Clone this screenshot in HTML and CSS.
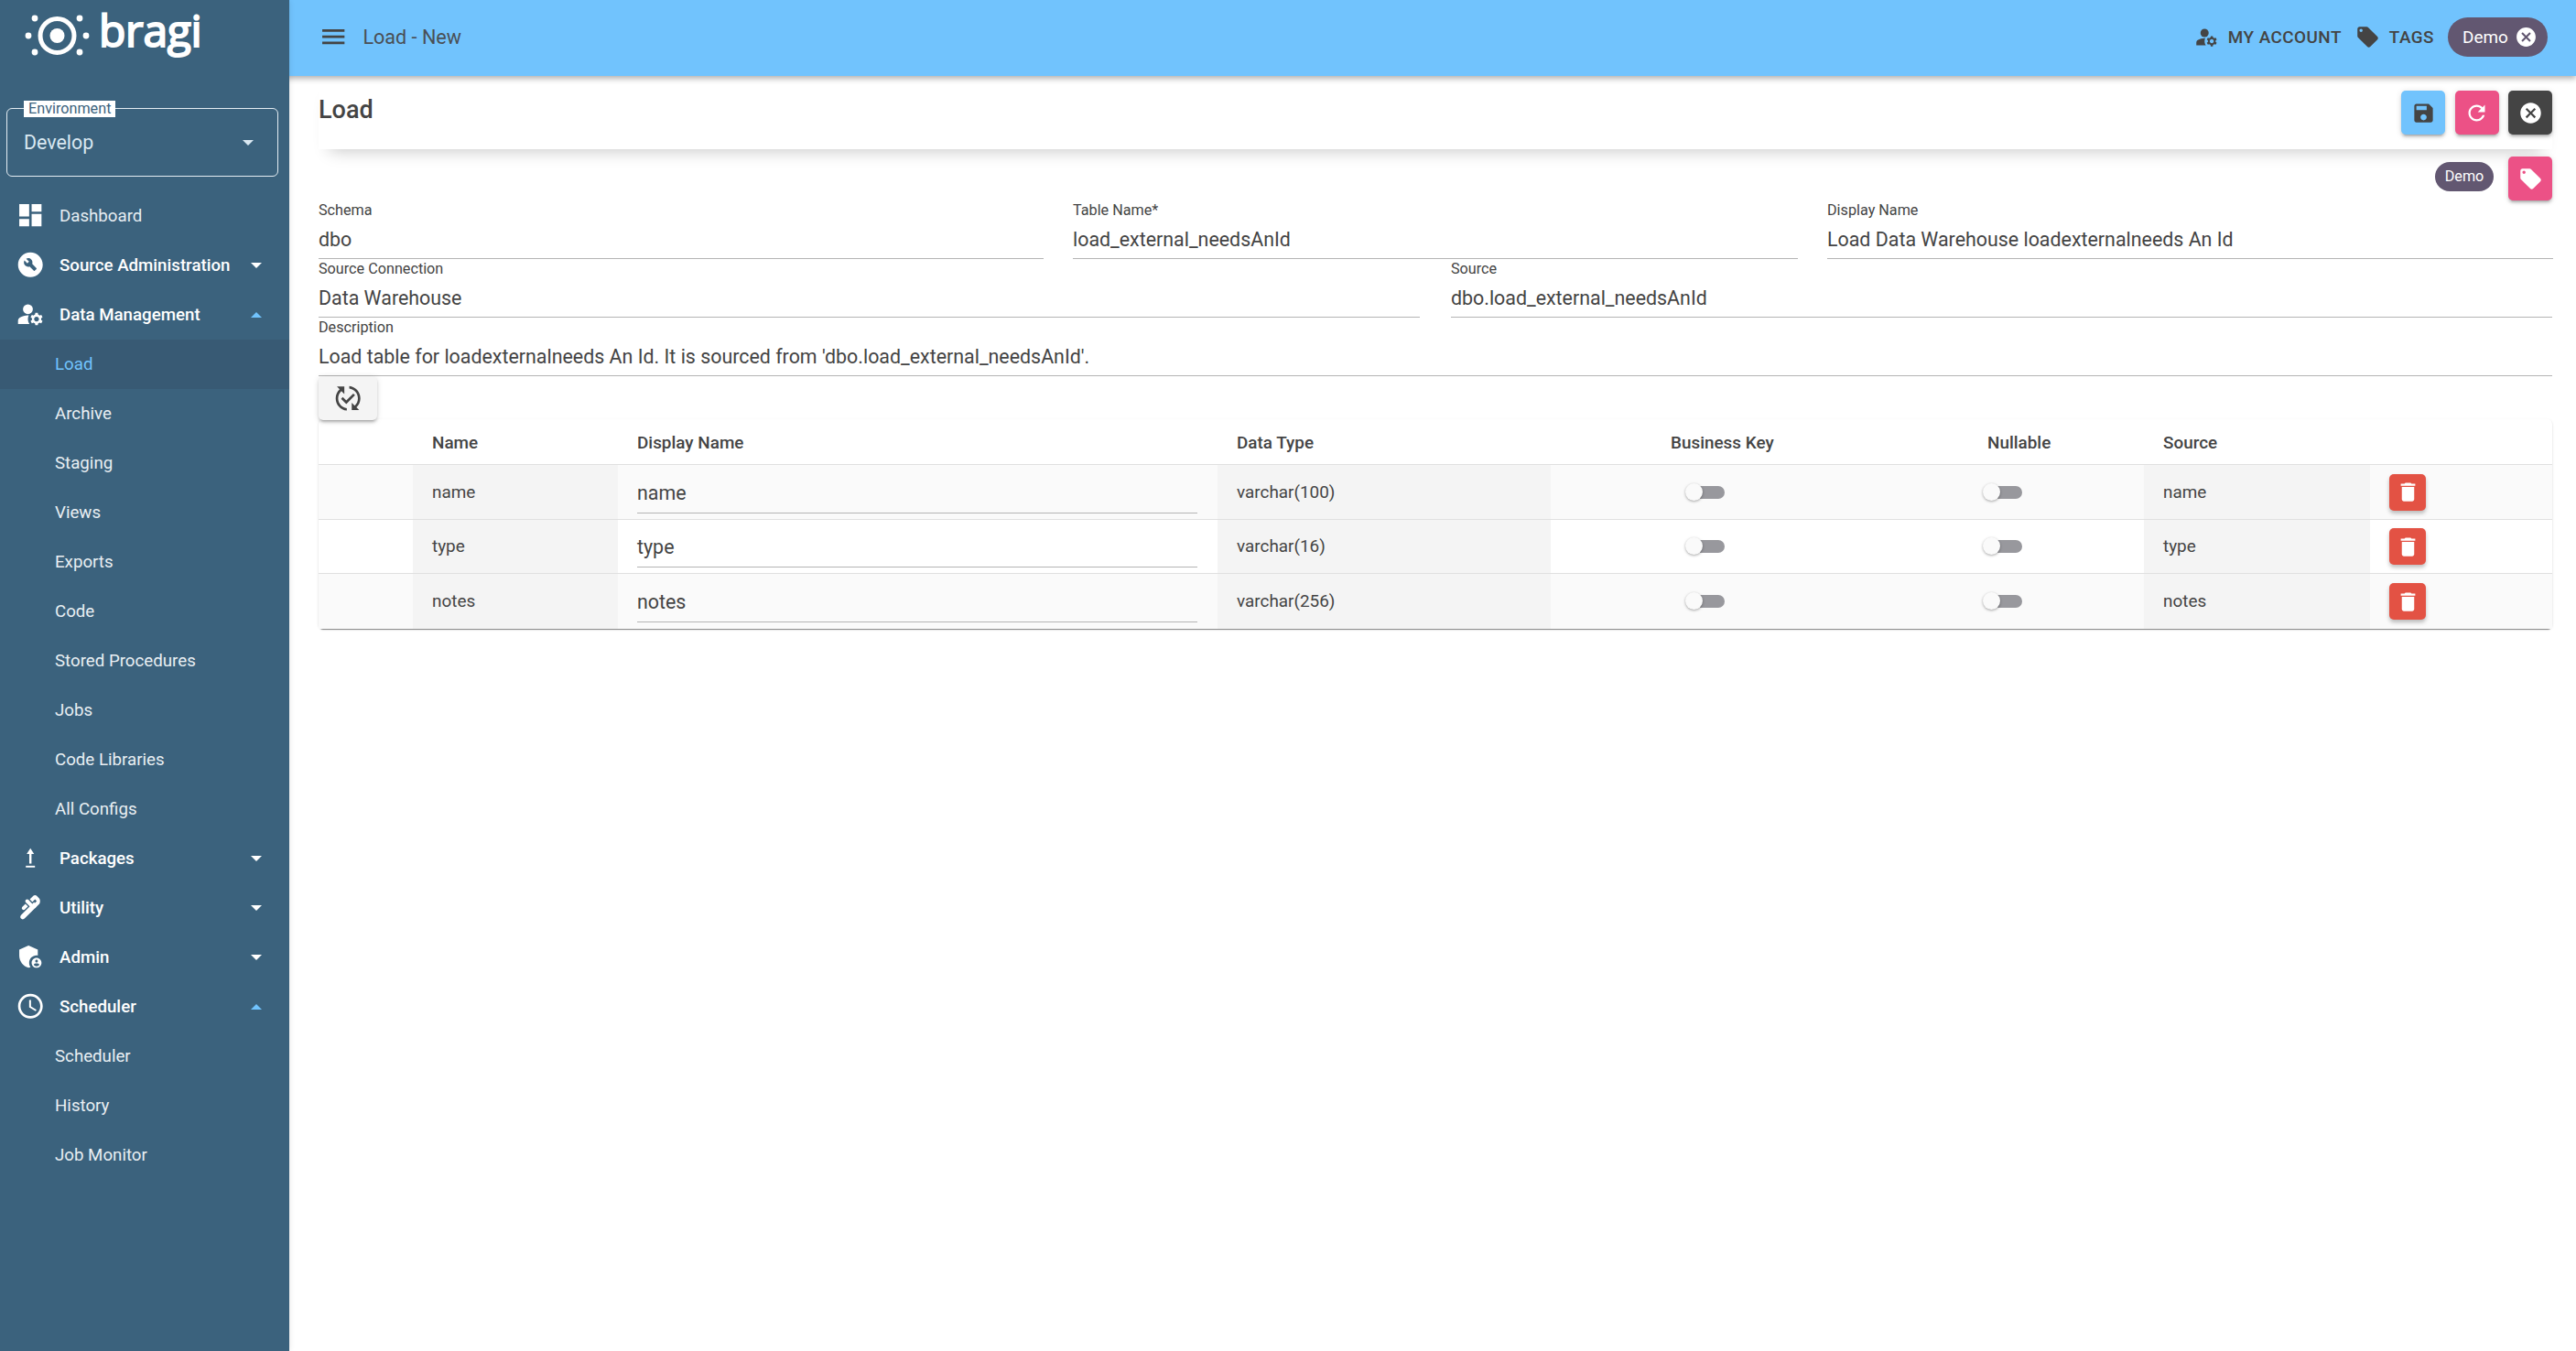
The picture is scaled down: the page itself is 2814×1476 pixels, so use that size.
FILE: index.html
```html
<!DOCTYPE html>
<html lang="en">
<head>
  <meta charset="UTF-8" />
  <title>Bragi - Load</title>
  <link rel="stylesheet" href="styles.css">
</head>
<body>
  <div class="sidebar">
    <div class="logo">
      <svg class="logo-mark" viewBox="0 0 108 83">
        <circle cx="62.5" cy="39" r="18.5" fill="none" stroke="#fff" stroke-width="5"/>
        <circle cx="62.5" cy="39" r="8" fill="#fff"/>
        <circle cx="38" cy="20" r="3.4" fill="#fff"/>
        <circle cx="87" cy="20" r="3.4" fill="#fff"/>
        <circle cx="31" cy="39" r="3.4" fill="#fff"/>
        <circle cx="94" cy="39" r="3.4" fill="#fff"/>
        <circle cx="38" cy="57" r="3.4" fill="#fff"/>
        <circle cx="87" cy="57" r="3.4" fill="#fff"/>
      </svg>
      <span class="logo-word">bragi</span>
    </div>

    <div class="env-select">
      <span class="env-label">Environment</span>
      <span class="env-value">Develop</span>
      <span class="caret caret-env"></span>
    </div>

    <div class="nav">
      <div class="nav-item plain">
        <svg class="nav-icon" viewBox="0 0 24 24"><path d="M3 13h8V3H3v10zm0 8h8v-6H3v6zm10 0h8V11h-8v10zm0-18v6h8V3h-8z"/></svg>
        <span>Dashboard</span>
      </div>
      <div class="nav-item">
        <svg class="nav-icon" viewBox="0 0 24 24"><path d="M12,2C6.48,2,2,6.48,2,12c0,5.52,4.48,10,10,10s10-4.48,10-10C22,6.48,17.52,2,12,2z M16.9,15.49l-1.4,1.4c-0.2,0.2-0.51,0.2-0.71,0l-3.41-3.41c-1.22,0.43-2.64,0.17-3.62-0.81c-1.11-1.11-1.3-2.79-0.59-4.1l2.35,2.35l1.41-1.41L8.58,7.17c1.32-0.71,2.99-0.52,4.1,0.59c0.98,0.98,1.24,2.4,0.81,3.62l3.41,3.41C17.09,14.98,17.09,15.3,16.9,15.49z"/></svg>
        <span>Source Administration</span>
        <span class="caret"></span>
      </div>
      <div class="nav-item">
        <svg class="nav-icon" viewBox="0 0 24 24"><circle cx="10" cy="8" r="4"/><path d="M10.67,13.02C10.45,13.01,10.23,13,10,13c-2.42,0-4.68,0.67-6.61,1.82C2.51,15.34,2,16.32,2,17.35V20h9.26C10.47,18.87,10,17.49,10,16C10,14.93,10.25,13.93,10.67,13.02z"/><path d="M20.75,16c0-0.22-0.03-0.42-0.06-0.63l1.14-1.01l-1-1.73l-1.45,0.49c-0.32-0.27-0.68-0.48-1.08-0.63L18,11h-2l-0.3,1.49c-0.4,0.15-0.76,0.36-1.08,0.63l-1.45-0.49l-1,1.73l1.14,1.01c-0.03,0.21-0.06,0.41-0.06,0.63s0.03,0.42,0.06,0.63l-1.14,1.01l1,1.73l1.45-0.49c0.32,0.27,0.68,0.48,1.08,0.63L16,21h2l0.3-1.49c0.4-0.15,0.76-0.36,1.08-0.63l1.45,0.49l1-1.73l-1.14-1.01C20.72,16.42,20.75,16.22,20.75,16z M17,18c-1.1,0-2-0.9-2-2s0.9-2,2-2s2,0.9,2,2S18.1,18,17,18z"/></svg>
        <span>Data Management</span>
        <span class="caret open"></span>
      </div>
      <div class="nav-sub active">Load</div>
      <div class="nav-sub">Archive</div>
      <div class="nav-sub">Staging</div>
      <div class="nav-sub">Views</div>
      <div class="nav-sub">Exports</div>
      <div class="nav-sub">Code</div>
      <div class="nav-sub">Stored Procedures</div>
      <div class="nav-sub">Jobs</div>
      <div class="nav-sub">Code Libraries</div>
      <div class="nav-sub">All Configs</div>
      <div class="nav-item">
        <svg class="nav-icon" viewBox="0 0 24 24"><path d="M8.3 18.4h7.4v1.4H8.3z"/><path d="M11.1 16.6V8.8H9L12 4.2l3 4.6h-2.1v7.8z"/></svg>
        <span>Packages</span>
        <span class="caret"></span>
      </div>
      <div class="nav-item">
        <svg class="nav-icon" viewBox="0 0 24 24"><path d="M19.28,4.93l-2.12-2.12c-0.78-0.78-2.05-0.78-2.83,0L11.5,5.64l2.12,2.12l2.12-2.12l1.41,1.41L13.62,10.6l2.12,2.12l3.54-3.54C20.06,8.4,20.06,5.71,19.28,4.93z"/><path d="M5.49,13.77c0.59,0.59,1.54,0.59,2.12,0l2.47-2.47L7.96,9.17l-2.47,2.47C4.9,12.23,4.9,13.18,5.49,13.77L5.49,13.77z"/><path d="M15.04,7.76l-0.71,0.71l-0.71,0.71l-3.18-3.18C9.85,5.4,8.9,5.4,8.32,5.99c-0.59,0.59-0.59,1.54,0,2.12l3.18,3.18L10.79,12l-6.36,6.36c-0.78,0.78-0.78,2.05,0,2.83c0.78,0.78,2.05,0.78,2.83,0L16.45,12c0.39-0.39,0.39-1.02,0-1.41L15.04,7.76z"/></svg>
        <span>Utility</span>
        <span class="caret"></span>
      </div>
      <div class="nav-item">
        <svg class="nav-icon" viewBox="0 0 24 24"><path d="M17,11c0.34,0,0.67,0.04,1,0.09V6.27L10.5,3L3,6.27v4.91c0,4.54,3.2,8.79,7.5,9.82c0.55-0.13,1.08-0.32,1.6-0.55C11.41,19.47,11,18.28,11,17C11,13.69,13.69,11,17,11z"/><path d="M17,13c-2.21,0-4,1.79-4,4c0,2.21,1.79,4,4,4s4-1.79,4-4C21,14.79,19.21,13,17,13z M17,14.38c0.62,0,1.12,0.51,1.12,1.12s-0.51,1.12-1.12,1.12s-1.12-0.51-1.12-1.12S16.38,14.38,17,14.38z M17,19.75c-0.93,0-1.74-0.46-2.24-1.17c0.05-0.72,1.51-1.08,2.24-1.08s2.19,0.36,2.24,1.08C18.74,19.29,17.93,19.75,17,19.75z"/></svg>
        <span>Admin</span>
        <span class="caret"></span>
      </div>
      <div class="nav-item">
        <svg class="nav-icon" viewBox="0 0 24 24"><path d="M11.99 2C6.47 2 2 6.48 2 12s4.47 10 9.99 10C17.52 22 22 17.52 22 12S17.52 2 11.99 2zM12 20c-4.42 0-8-3.58-8-8s3.58-8 8-8 8 3.58 8 8-3.58 8-8 8z"/><path d="M12.5 7H11v6l5.25 3.15.75-1.23-4.5-2.67z"/></svg>
        <span>Scheduler</span>
        <span class="caret open"></span>
      </div>
      <div class="nav-sub">Scheduler</div>
      <div class="nav-sub">History</div>
      <div class="nav-sub">Job Monitor</div>
    </div>
  </div>

  <div class="main">
    <div class="topbar">
      <svg class="menu-icon" viewBox="0 0 24 24"><path d="M3 18h18v-2H3v2zm0-5h18v-2H3v2zm0-7v2h18V6H3z"/></svg>
      <span class="page-title">Load - New</span>
      <div class="top-actions">
        <div class="top-link">
          <svg class="top-icon" viewBox="0 0 24 24"><circle cx="10" cy="8" r="4"/><path d="M10.67,13.02C10.45,13.01,10.23,13,10,13c-2.42,0-4.68,0.67-6.61,1.82C2.51,15.34,2,16.32,2,17.35V20h9.26C10.47,18.87,10,17.49,10,16C10,14.93,10.25,13.93,10.67,13.02z"/><path d="M20.75,16c0-0.22-0.03-0.42-0.06-0.63l1.14-1.01l-1-1.73l-1.45,0.49c-0.32-0.27-0.68-0.48-1.08-0.63L18,11h-2l-0.3,1.49c-0.4,0.15-0.76,0.36-1.08,0.63l-1.45-0.49l-1,1.73l1.14,1.01c-0.03,0.21-0.06,0.41-0.06,0.63s0.03,0.42,0.06,0.63l-1.14,1.01l1,1.73l1.45-0.49c0.32,0.27,0.68,0.48,1.08,0.63L16,21h2l0.3-1.49c0.4-0.15,0.76-0.36,1.08-0.63l1.45,0.49l1-1.73l-1.14-1.01C20.72,16.42,20.75,16.22,20.75,16z M17,18c-1.1,0-2-0.9-2-2s0.9-2,2-2s2,0.9,2,2S18.1,18,17,18z"/></svg>
          <span>MY ACCOUNT</span>
        </div>
        <div class="top-link">
          <svg class="top-icon" viewBox="0 0 24 24"><path d="M21.41 11.58l-9-9C12.05 2.22 11.55 2 11 2H4c-1.1 0-2 .9-2 2v7c0 .55.22 1.05.59 1.42l9 9c.36.36.86.58 1.41.58.55 0 1.05-.22 1.41-.59l7-7c.37-.36.59-.86.59-1.41 0-.55-.23-1.06-.59-1.42zM5.5 7C4.67 7 4 6.33 4 5.5S4.67 4 5.5 4 7 4.67 7 5.5 6.33 7 5.5 7z"/></svg>
          <span>TAGS</span>
        </div>
        <div class="chip">
          <span>Demo</span>
          <svg class="chip-close" viewBox="0 0 24 24"><path d="M12 2C6.47 2 2 6.47 2 12s4.47 10 10 10 10-4.47 10-10S17.53 2 12 2zm5 13.59L15.59 17 12 13.41 8.41 17 7 15.59 10.59 12 7 8.41 8.41 7 12 10.59 15.59 7 17 8.41 13.41 12 17 15.59z"/></svg>
        </div>
      </div>
    </div>

    <div class="content">
      <div class="card-head">
        <h2>Load</h2>
        <div class="head-buttons">
          <div class="btn btn-blue"><svg viewBox="0 0 24 24"><path d="M17 3H5c-1.11 0-2 .9-2 2v14c0 1.1.89 2 2 2h14c1.1 0 2-.9 2-2V7l-4-4zm-5 16c-1.66 0-3-1.34-3-3s1.34-3 3-3 3 1.34 3 3-1.34 3-3 3zm3-10H5V5h10v4z"/></svg></div>
          <div class="btn btn-pink"><svg viewBox="0 0 24 24"><path d="M17.65 6.35C16.2 4.9 14.21 4 12 4c-4.42 0-7.99 3.58-7.99 8s3.57 8 7.99 8c3.73 0 6.84-2.55 7.73-6h-2.08c-.82 2.33-3.04 4-5.65 4-3.31 0-6-2.69-6-6s2.69-6 6-6c1.66 0 3.14.69 4.22 1.78L13 11h7V4l-2.35 2.35z"/></svg></div>
          <div class="btn btn-dark"><svg viewBox="0 0 24 24"><path d="M12 2C6.47 2 2 6.47 2 12s4.47 10 10 10 10-4.47 10-10S17.53 2 12 2zm5 13.59L15.59 17 12 13.41 8.41 17 7 15.59 10.59 12 7 8.41 8.41 7 12 10.59 15.59 7 17 8.41 13.41 12 17 15.59z"/></svg></div>
        </div>
      </div>

      <div class="tag-row">
        <span class="chip-small">Demo</span>
        <div class="btn btn-pink"><svg viewBox="0 0 24 24"><path d="M21.41 11.58l-9-9C12.05 2.22 11.55 2 11 2H4c-1.1 0-2 .9-2 2v7c0 .55.22 1.05.59 1.42l9 9c.36.36.86.58 1.41.58.55 0 1.05-.22 1.41-.59l7-7c.37-.36.59-.86.59-1.41 0-.55-.23-1.06-.59-1.42zM5.5 7C4.67 7 4 6.33 4 5.5S4.67 4 5.5 4 7 4.67 7 5.5 6.33 7 5.5 7z"/></svg></div>
      </div>

      <div class="form-row cols-3">
        <div class="field"><label>Schema</label><div class="value">dbo</div></div>
        <div class="field"><label>Table Name*</label><div class="value">load_external_needsAnId</div></div>
        <div class="field"><label>Display Name</label><div class="value">Load Data Warehouse loadexternalneeds An Id</div></div>
      </div>
      <div class="form-row cols-2">
        <div class="field"><label>Source Connection</label><div class="value">Data Warehouse</div></div>
        <div class="field"><label>Source</label><div class="value">dbo.load_external_needsAnId</div></div>
      </div>
      <div class="form-row">
        <div class="field"><label>Description</label><div class="value">Load table for loadexternalneeds An Id. It is sourced from 'dbo.load_external_needsAnId'.</div></div>
      </div>

      <div class="btn btn-grey"><svg viewBox="0 0 24 24"><path d="M17.66,9.53l-7.07,7.07l-4.24-4.24l1.41-1.41l2.83,2.83l5.66-5.66L17.66,9.53z M4,12c0-2.33,1.02-4.42,2.62-5.88L9,8.5v-6H3l2.2,2.2C3.24,6.52,2,9.11,2,12c0,5.19,3.95,9.45,9,9.95v-2.02C7.06,19.44,4,16.07,4,12z M22,12c0-5.19-3.95-9.45-9-9.95v2.02c3.94,0.49,7,3.86,7,7.93c0,2.33-1.02,4.42-2.62,5.88L15,15.5v6h6l-2.2-2.2C20.76,17.48,22,14.89,22,12z"/></svg></div>

      <div class="table-wrap">
        <table class="columns">
          <colgroup>
            <col class="c-blank"><col class="c-name"><col class="c-display"><col class="c-type"><col class="c-key"><col class="c-null"><col class="c-source"><col class="c-action">
          </colgroup>
          <thead>
            <tr>
              <th></th>
              <th>Name</th>
              <th>Display Name</th>
              <th>Data Type</th>
              <th class="th-key">Business Key</th>
              <th>Nullable</th>
              <th>Source</th>
              <th></th>
            </tr>
          </thead>
          <tbody>
            <tr>
              <td></td>
              <td class="shade">name</td>
              <td><div class="cell-input">name</div></td>
              <td class="shade">varchar(100)</td>
              <td><div class="toggle toggle-key"></div></td>
              <td><div class="toggle toggle-null"></div></td>
              <td class="shade">name</td>
              <td><div class="btn-delete"><svg viewBox="0 0 24 24"><path d="M6 19c0 1.1.9 2 2 2h8c1.1 0 2-.9 2-2V7H6v12zM19 4h-3.5l-1-1h-5l-1 1H5v2h14V4z"/></svg></div></td>
            </tr>
            <tr>
              <td></td>
              <td class="shade">type</td>
              <td><div class="cell-input">type</div></td>
              <td class="shade">varchar(16)</td>
              <td><div class="toggle toggle-key"></div></td>
              <td><div class="toggle toggle-null"></div></td>
              <td class="shade">type</td>
              <td><div class="btn-delete"><svg viewBox="0 0 24 24"><path d="M6 19c0 1.1.9 2 2 2h8c1.1 0 2-.9 2-2V7H6v12zM19 4h-3.5l-1-1h-5l-1 1H5v2h14V4z"/></svg></div></td>
            </tr>
            <tr>
              <td></td>
              <td class="shade">notes</td>
              <td><div class="cell-input">notes</div></td>
              <td class="shade">varchar(256)</td>
              <td><div class="toggle toggle-key"></div></td>
              <td><div class="toggle toggle-null"></div></td>
              <td class="shade">notes</td>
              <td><div class="btn-delete"><svg viewBox="0 0 24 24"><path d="M6 19c0 1.1.9 2 2 2h8c1.1 0 2-.9 2-2V7H6v12zM19 4h-3.5l-1-1h-5l-1 1H5v2h14V4z"/></svg></div></td>
            </tr>
          </tbody>
        </table>
      </div>
    </div>
  </div>
</body>
</html>
```

FILE: styles.css
```css
/* base */
* { margin: 0; padding: 0; box-sizing: border-box; }
body {
  font-family: Roboto, "Liberation Sans", sans-serif;
  height: 100vh;
  overflow: hidden;
  background: #fff;
  color: #444;
  display: flex;
}

/* sidebar */
.sidebar {
  width: 316px;
  height: 100vh;
  flex-shrink: 0;
  background: #3b627d;
  color: #fff;
  box-shadow: 0 0 6px rgba(0, 0, 0, 0.12);
  position: relative;
  z-index: 3;
}

.logo {
  height: 83px;
  display: flex;
  align-items: flex-start;
}

.logo-mark {
  width: 108px;
  height: 83px;
  flex-shrink: 0;
}

.logo-word {
  font-family: "Open Sans", sans-serif;
  font-size: 48px;
  line-height: 66px;
  color: #fff;
  letter-spacing: -0.3px;
  -webkit-text-stroke: 2px #fff;
}

.env-select {
  height: 75px;
  margin: 35px 12px 15.5px 7px;
  padding: 0 19px 0 18px;
  border: 1.4px solid #e4edf3;
  border-radius: 6px;
  display: flex;
  align-items: center;
  justify-content: space-between;
  position: relative;
}

.env-label {
  position: absolute;
  left: 18px;
  top: -9px;
  padding: 0 5px;
  height: 18px;
  line-height: 18px;
  background: #fff;
  color: #3b627d;
  font-size: 16.2px;
}

.env-value {
  font-size: 21.4px;
  color: #d9e8f2;
}

.caret {
  width: 0;
  height: 0;
  margin-left: auto;
  border-left: 6.5px solid transparent;
  border-right: 6.5px solid transparent;
  border-top: 6.5px solid #fff;
}

.caret.open {
  border-top: 0;
  border-bottom: 6.5px solid #71c3fd;
}

.caret-env {
  margin-right: 7px;
  border-top-color: #d9e8f2;
}

.nav-item {
  height: 54px;
  padding: 0 30px 0 17px;
  display: flex;
  align-items: center;
  font-size: 18.7px;
  font-weight: 500;
  color: #fff;
}

.nav-item.plain {
  font-weight: 400;
  color: #e6edf2;
}

.nav-icon {
  width: 32.4px;
  height: 32.4px;
  margin-right: 15.6px;
  fill: #fff;
  flex-shrink: 0;
}

.nav-sub {
  height: 54px;
  line-height: 54px;
  padding-left: 60px;
  font-size: 18.7px;
  color: #e9eff3;
}

.nav-sub.active {
  background: #385a74;
  color: #71c3fd;
}

/* main */
.main {
  flex: 1;
  min-width: 0;
  height: 100vh;
}

.topbar {
  height: 83px;
  padding: 0 31px 2px 348px;
  margin-left: -316px;
  background: #71c3fd;
  box-shadow: 0 3px 6px rgba(0, 0, 0, 0.3);
  display: flex;
  align-items: center;
  position: relative;
  z-index: 2;
}

.menu-icon {
  width: 32.4px;
  height: 32.4px;
  fill: #444;
  flex-shrink: 0;
}

.page-title {
  margin-left: 16px;
  font-size: 21.6px;
  color: #4a4f55;
}

.top-actions {
  margin-left: auto;
  display: flex;
  align-items: center;
}

.top-link {
  display: flex;
  align-items: center;
  margin-right: 15px;
  font-size: 18.9px;
  font-weight: 500;
  letter-spacing: 0.45px;
  color: #444;
}

.top-icon {
  width: 27px;
  height: 27px;
  margin-right: 10px;
  fill: #444;
}

.chip {
  height: 43px;
  width: 109px;
  padding: 0 11px 0 16px;
  border-radius: 22px;
  background: #625771;
  color: #fff;
  font-size: 18.9px;
  display: flex;
  align-items: center;
  justify-content: space-between;
}

.chip-close {
  width: 25px;
  height: 25px;
  fill: #fff;
}

.content {
  padding: 0 26px 0 32px;
}

.card-head {
  height: 80px;
  padding-top: 16px;
  display: flex;
  justify-content: space-between;
  align-items: flex-start;
  background: #fff;
  box-shadow: 0 14px 18px -12px rgba(0, 0, 0, 0.22);
}

.card-head h2 {
  font-size: 27px;
  font-weight: 500;
  line-height: 40px;
  color: #444;
  margin-top: 1px;
}

.head-buttons {
  display: flex;
  gap: 10.5px;
}

.btn {
  width: 48px;
  height: 48px;
  border-radius: 5px;
  display: flex;
  align-items: center;
  justify-content: center;
  box-shadow: 0 4px 2px -3px rgba(0, 0, 0, 0.2), 0 3px 3px 0 rgba(0, 0, 0, 0.14), 0 1px 7px 0 rgba(0, 0, 0, 0.12);
}

.btn svg {
  width: 27px;
  height: 27px;
}

.btn-blue { background: #71c3fd; fill: #444; }
.btn-pink { background: #ec5186; fill: #fff; }
.btn-dark { background: #444; fill: #fff; }

.btn-grey {
  width: 64px;
  background: #f4f4f4;
  fill: #444;
  position: relative;
  z-index: 1;
}

.btn-grey svg {
  width: 32.4px;
  height: 32.4px;
}

.tag-row {
  height: 56px;
  padding-top: 8px;
  display: flex;
  align-items: center;
  justify-content: flex-end;
}

.chip-small {
  height: 32px;
  line-height: 32px;
  width: 64px;
  margin-right: 16px;
  margin-bottom: 4px;
  text-align: center;
  border-radius: 16px;
  background: #625771;
  color: #fff;
  font-size: 16.2px;
}

/* form */
.form-row {
  display: grid;
  grid-template-columns: 1fr;
  height: 64px;
}

.form-row.cols-3 {
  grid-template-columns: 792px 792px 793px;
  column-gap: 32px;
}

.form-row.cols-2 {
  grid-template-columns: 1203px 1203px;
  column-gap: 34px;
}

.field label {
  display: block;
  height: 22px;
  line-height: 22px;
  font-size: 16.2px;
  color: #444;
}

.value {
  height: 42px;
  line-height: 41px;
  font-size: 21.4px;
  color: #444;
  border-bottom: 1.4px solid #b4b4b4;
}

/* columns table */
.table-wrap {
  margin-top: -1px;
  border-radius: 5px;
  background: #fff;
  box-shadow: 0 2px 1px -1px rgba(0, 0, 0, 0.3), 0 1px 1px 0 rgba(0, 0, 0, 0.2), 0 1px 3px 0 rgba(0, 0, 0, 0.1);
}

.columns {
  width: 100%;
  table-layout: fixed;
  border-collapse: separate;
  border-spacing: 0;
  font-size: 18.9px;
  color: #444;
}

.c-blank { width: 103px; }
.c-name { width: 224px; }
.c-display { width: 655px; }
.c-type { width: 364px; }
.c-key { width: 456px; }
.c-null { width: 192px; }
.c-source { width: 247px; }
.c-action { width: 199px; }

.columns th {
  height: 50px;
  padding-left: 21px;
  padding-top: 1px;
  text-align: left;
  font-weight: 500;
  border-bottom: 1.4px solid #e0e0e0;
}

.columns th.th-key {
  padding-left: 131px;
}

.columns td {
  height: 59.5px;
  padding-left: 21px;
  border-bottom: 1.4px solid #e0e0e0;
}

.columns tbody tr:nth-child(odd) td { background: #fafafa; }
.columns tbody tr:last-child td { border-bottom: 0; }
.columns tbody td.shade,
.columns tbody tr:nth-child(odd) td.shade { background: #f4f4f4; }

.cell-input {
  width: 612px;
  height: 40px;
  margin-top: 7px;
  line-height: 36px;
  font-size: 21.4px;
  border-bottom: 1.4px solid #b4b4b4;
}

.toggle {
  width: 43px;
  height: 20px;
  margin-top: 1px;
  position: relative;
}

.toggle::before {
  content: "";
  position: absolute;
  left: 5px;
  right: 0;
  top: 3px;
  height: 14px;
  border-radius: 7px;
  background: #98989d;
}

.toggle::after {
  content: "";
  position: absolute;
  left: 0;
  top: 0;
  width: 19px;
  height: 19px;
  border-radius: 50%;
  background: #fafafa;
  box-shadow: 0 1px 3px rgba(0, 0, 0, 0.35);
}

.toggle-key { margin-left: 126px; }
.toggle-null { margin-left: -5px; }

.btn-delete {
  width: 40px;
  height: 40px;
  margin-top: 1px;
  border-radius: 5px;
  background: #e35244;
  fill: #fff;
  display: flex;
  align-items: center;
  justify-content: center;
  box-shadow: 0 3px 4px rgba(0, 0, 0, 0.25);
}

.btn-delete svg {
  width: 27px;
  height: 27px;
}
```
